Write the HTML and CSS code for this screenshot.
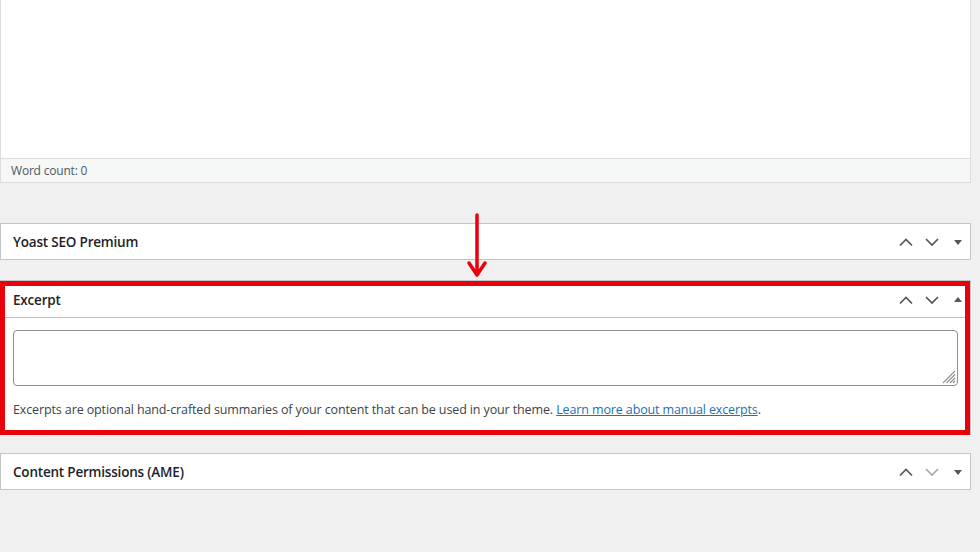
FILE: index.html
```html
<!DOCTYPE html>
<html>
<head>
<meta charset="utf-8">
<link rel="stylesheet" href="styles.css">
</head>
<body>
<div class="page">
  <div class="editor">
    <div class="editor-area"></div>
    <div class="status">Word count: 0</div>
  </div>

  <div class="boxes">
    <div class="postbox">
      <div class="hndle">
        <h2>Yoast SEO Premium</h2>
        <div class="actions">
          <svg class="ic" width="16" height="16" viewBox="0 0 16 16"><path d="M2 11.5 L8 5.5 L14 11.5" fill="none" stroke="#50575e" stroke-width="1.7"/></svg>
          <svg class="ic" width="16" height="16" viewBox="0 0 16 16"><path d="M2 5 L8 11 L14 5" fill="none" stroke="#50575e" stroke-width="1.7"/></svg>
          <svg class="tri" width="10" height="10" viewBox="0 0 10 10"><path d="M1 3 L9 3 L5 8 Z" fill="#50575e"/></svg>
        </div>
      </div>
    </div>

    <div class="postbox highlighted">
      <div class="hndle bordered">
        <h2>Excerpt</h2>
        <div class="actions">
          <svg class="ic" width="16" height="16" viewBox="0 0 16 16"><path d="M2 11.5 L8 5.5 L14 11.5" fill="none" stroke="#50575e" stroke-width="1.7"/></svg>
          <svg class="ic" width="16" height="16" viewBox="0 0 16 16"><path d="M2 5 L8 11 L14 5" fill="none" stroke="#50575e" stroke-width="1.7"/></svg>
          <svg class="tri" width="10" height="10" viewBox="0 0 10 10"><path d="M1 7 L9 7 L5 2 Z" fill="#50575e"/></svg>
        </div>
      </div>
      <div class="inside">
        <div class="textarea">
          <svg class="grip" width="14" height="14" viewBox="0 0 14 14"><path d="M13 1 L1 13 M13 4.5 L4.5 13 M13 8 L8 13 M13 11 L11 13" stroke="#8c8f94" stroke-width="1.1" fill="none"/></svg>
        </div>
        <p class="desc">Excerpts are optional hand-crafted summaries of your content that can be used in your theme. <a href="#">Learn more about manual excerpts</a>.</p>
      </div>
    </div>

    <div class="postbox">
      <div class="hndle">
        <h2>Content Permissions (AME)</h2>
        <div class="actions">
          <svg class="ic" width="16" height="16" viewBox="0 0 16 16"><path d="M2 11.5 L8 5.5 L14 11.5" fill="none" stroke="#50575e" stroke-width="1.7"/></svg>
          <svg class="ic" width="16" height="16" viewBox="0 0 16 16"><path d="M2 5 L8 11 L14 5" fill="none" stroke="#a7aaad" stroke-width="1.7"/></svg>
          <svg class="tri" width="10" height="10" viewBox="0 0 10 10"><path d="M1 3 L9 3 L5 8 Z" fill="#50575e"/></svg>
        </div>
      </div>
    </div>
  </div>

  <svg class="arrow" width="24" height="66" viewBox="0 0 24 66"><path d="M12 2 L12 58" stroke="#e8000b" stroke-width="3.5" stroke-linecap="round"/><path d="M4 50 L12 62 L20 50" fill="none" stroke="#e8000b" stroke-width="3.5" stroke-linecap="round" stroke-linejoin="round"/></svg>
</div>
</body>
</html>
```

FILE: styles.css
```css
* { box-sizing: border-box; }
html, body { margin: 0; padding: 0; }
body {
  background: #f0f0f1;
  font-family: "Open Sans", "Noto Sans", sans-serif;
  color: #1d2327;
  width: 980px;
  height: 552px;
  overflow: hidden;
}
.page { position: relative; }

.editor {
  width: 971px;
  border: 1px solid #dcdcde;
  border-top: none;
  background: #fff;
}
.editor-area { height: 158px; }
.status {
  height: 24px;
  border-top: 1px solid #dcdcde;
  background: #f6f7f7;
  font-size: 12px;
  color: #50575e;
  padding: 4px 0 0 10px;
  line-height: 16px;
  letter-spacing: -0.2px;
}

.boxes {
  margin-top: 40px;
  display: flex;
  flex-direction: column;
  gap: 20px;
  width: 971px;
}
.postbox {
  background: #fff;
  border: 1px solid #c3c4c7;
  position: relative;
}
.postbox.highlighted { margin-bottom: -2px; }
.hndle {
  height: 35px;
  display: flex;
  align-items: center;
  justify-content: space-between;
  padding-left: 12px;
}
.hndle.bordered {
  border-bottom: 1px solid #c3c4c7;
  height: 37px;
  padding-top: 1px;
}
.hndle h2 {
  margin: 0;
  font-size: 13.5px;
  font-weight: 600;
  letter-spacing: -0.2px;
}
.actions {
  display: flex;
  align-items: center;
  height: 100%;
  padding-right: 7px;
}
.ic { width: 16px; height: 16px; margin: 0; }
.ic + .ic { margin-left: 10px; margin-right: 13px; }
.tri { margin-left: 0; }

.inside { padding: 12px 12px 14px 12px; }
.textarea {
  height: 56px;
  border: 1px solid #8c8f94;
  border-radius: 4px;
  position: relative;
}
.grip { position: absolute; right: 1px; bottom: 1px; }
.desc {
  margin: 14px 0 0 0;
  font-size: 12.5px;
  line-height: 20px;
  color: #3c434a;
  letter-spacing: -0.12px;
}
.desc a { color: #2271b1; text-decoration: underline; }

.highlighted::after {
  content: "";
  position: absolute;
  top: 0;
  left: -1px;
  right: 0;
  bottom: -1px;
  border: 5px solid #e8000b;
  pointer-events: none;
}

.arrow {
  position: absolute;
  left: 465px;
  top: 213px;
}
```
